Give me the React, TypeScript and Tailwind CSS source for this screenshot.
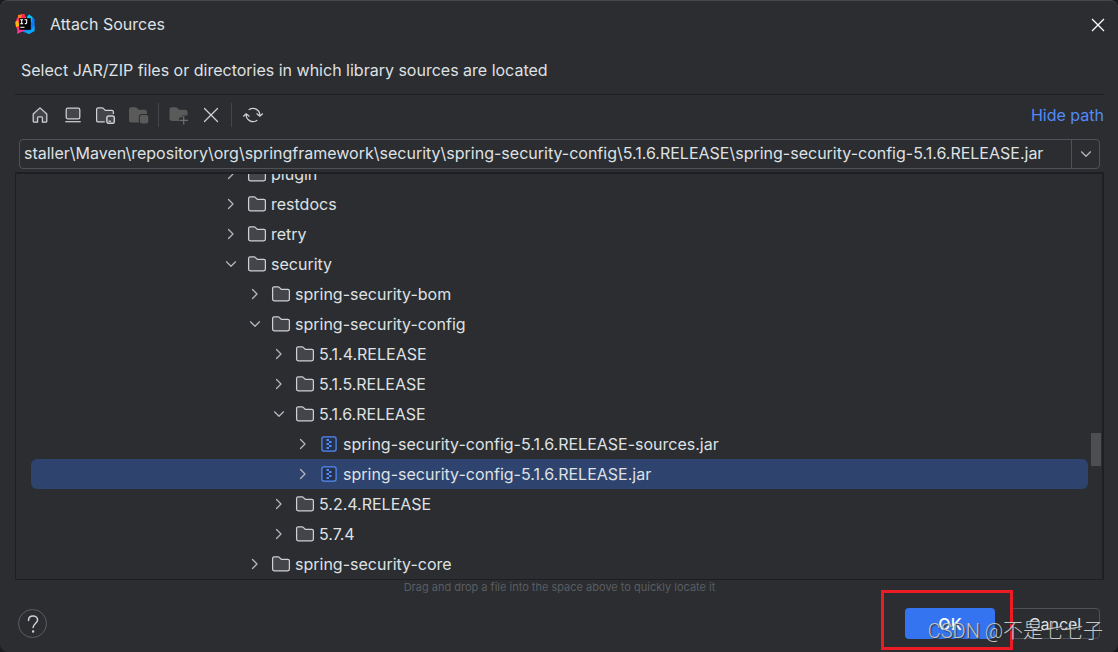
import React from "react";

type Node = { name: string; level: number; open?: boolean; jar?: boolean; selected?: boolean };

const nodes: Node[] = [
  { name: "plugin", level: 0 },
  { name: "restdocs", level: 0 },
  { name: "retry", level: 0 },
  { name: "security", level: 0, open: true },
  { name: "spring-security-bom", level: 1 },
  { name: "spring-security-config", level: 1, open: true },
  { name: "5.1.4.RELEASE", level: 2 },
  { name: "5.1.5.RELEASE", level: 2 },
  { name: "5.1.6.RELEASE", level: 2, open: true },
  { name: "spring-security-config-5.1.6.RELEASE-sources.jar", level: 3, jar: true },
  { name: "spring-security-config-5.1.6.RELEASE.jar", level: 3, jar: true, selected: true },
  { name: "5.2.4.RELEASE", level: 2 },
  { name: "5.7.4", level: 2 },
  { name: "spring-security-core", level: 1 },
];

const indents = ["pl-[192px]", "pl-[216px]", "pl-[240px]", "pl-[264px]"];

function Icon({ children, className = "" }: { children: React.ReactNode; className?: string }) {
  return (
    <svg
      className={"h-5 w-5 shrink-0 " + className}
      viewBox="0 0 20 20"
      fill="none"
      stroke="#ced0d6"
      strokeWidth="1.25"
      aria-hidden="true"
    >
      {children}
    </svg>
  );
}

function Chevron({ open }: { open?: boolean }) {
  return (
    <svg
      className="h-4 w-4"
      viewBox="0 0 16 16"
      fill="none"
      stroke="#b4b8bf"
      strokeWidth="1.25"
      strokeLinecap="round"
      strokeLinejoin="round"
      aria-hidden="true"
    >
      <path d={open ? "M3.5 5.8 8 10.3l4.5-4.5" : "M5.5 3.5 10 8l-4.5 4.5"} />
    </svg>
  );
}

const folderPath =
  "M1.6 4.5c0-1 .7-1.6 1.6-1.6h3.9c.5 0 .9.2 1.2.5l2 2h6.5c1 0 1.6.7 1.6 1.6v8.1c0 1-.7 1.7-1.6 1.7H3.2c-1 0-1.6-.7-1.6-1.7z";

function FolderIcon() {
  return (
    <Icon>
      <path fill="#43454a" d={folderPath} />
    </Icon>
  );
}

function JarIcon() {
  return (
    <Icon>
      <rect x="2.9" y="2.9" width="14.2" height="14.2" rx="2" fill="#25324d" stroke="#548af7" />
      <path
        d="M7.5 5H10v2H7.5zM10 7h2.500v2H10zM7.500 9H10v2H7.500zM10 11h2.500v2H10zM7.500 13H10v2H7.500z"
        fill="#548af7"
        stroke="none"
      />
    </Icon>
  );
}

function Tool({ label, disabled, children }: { label: string; disabled?: boolean; children: React.ReactNode }) {
  return (
    <button type="button" aria-label={label} disabled={disabled} className="h-5 w-5">
      <Icon>{children}</Icon>
    </button>
  );
}

function IdeaLogo() {
  return (
    <svg className="h-5 w-5" viewBox="0 0 20 20" aria-hidden="true">
      <path d="M3 1 9 0l2 4-2 5H3z" fill="#fc801d" />
      <path d="M0 9 2.5 3 8 6v9l-4 4-2.5-5z" fill="#fe315d" />
      <path d="M.5 8 3 6l1.500 6L1 13z" fill="#fdb60d" />
      <path d="m7 0 3 .5v5L6 4z" fill="#fe2857" />
      <path d="m12 3 2-2.500 5.500 4.500V17L14 20l-8-3 6-6z" fill="#087cfa" />
      <path d="m12 3 2-2.500L17.500 3l-1 5-4-1z" fill="#07c3f2" />
      <path d="m16 16 3.500-5v6L14 20l-6-3z" fill="#0aa5f5" />
      <path d="M2.500 14.500 9 13l1 3.500-5 2L2 20z" fill="#ff318c" />
      <path d="M4.200 4.200h11.600v11.600H4.200z" fill="#000" />
      <path
        d="M5.200 5.700h3M6.700 5.700v4M5.200 9.700h3M9.500 5.700h2.200v2.900c0 .8-.5 1.200-1.900 1"
        fill="none"
        stroke="#fff"
        strokeWidth="1.1"
      />
      <path d="M5.300 12.800h4.200v1H5.300z" fill="#fff" />
    </svg>
  );
}

function TreeRow({ node }: { node: Node }) {
  return (
    <li
      role="treeitem"
      aria-expanded={!!node.open}
      aria-selected={!!node.selected}
      className={
        "flex h-[30px] shrink-0 items-center rounded-md " +
        indents[node.level] +
        (node.selected ? " bg-[#2e436e]" : "")
      }
    >
      <button type="button" aria-label={"Toggle " + node.name} className="mr-2 h-4 w-4">
        <Chevron open={node.open} />
      </button>
      {node.jar ? <JarIcon /> : <FolderIcon />}
      <span className="ml-1 whitespace-nowrap">{node.name}</span>
    </li>
  );
}

export default function App() {
  return (
    <div className="bg-[#1b1b1d]">
      <div className="flex min-h-screen flex-col rounded-lg border-t border-[#46484c] bg-[#2b2d30] font-['Inter',sans-serif] text-base leading-5 text-[#dfe1e5]">
        {/* Title bar */}
        <header className="flex h-[46px] items-center pl-[15px] pr-[10px]">
          <IdeaLogo />
          <h1 className="ml-[15px] grow">Attach Sources</h1>
          <button type="button" aria-label="Close" className="h-5 w-5">
            <Icon>
              <path stroke="#fff" d="m4 5 12 12M16 5 4 17" />
            </Icon>
          </button>
        </header>

        <main className="flex grow flex-col pl-[15px] pr-[14px]">
          <p className="flex h-12 items-center border-b border-[#1e1f22] pb-px pl-[6px]">
            Select JAR/ZIP files or directories in which library sources are located
          </p>

          {/* Toolbar */}
          <div className="flex h-11 items-center pb-1 pl-[15px]">
            <div className="flex grow items-center gap-[13px]">
              <Tool label="Home directory">
                <path
                  fill="#43454a"
                  strokeLinejoin="round"
                  d="M3.2 9 10 2.9 16.8 9v7.200c0 .6-.4 1-1 1h-3.400v-4.400c0-.6-.4-1-1-1H8.600c-.6 0-1 .4-1 1v4.400H4.200c-.6 0-1-.4-1-1z"
                />
              </Tool>
              <Tool label="Desktop directory">
                <rect x="3.2" y="3.2" width="13.6" height="10.6" rx="1.6" fill="#43454a" />
                <path d="M2.3 16.7h15.4" />
              </Tool>
              <Tool label="Project directory">
                <path
                  fill="#43454a"
                  stroke="none"
                  d="M.6 4.500c0-1 .7-1.600 1.600-1.600h3.900l3.200 2.500h6.500c1 0 1.600.7 1.600 1.600v3h-6.800v7.200H2.200c-1 0-1.600-.7-1.600-1.700z"
                />
                <path d="M8.800 16.900H2.200c-1 0-1.600-.7-1.600-1.700V4.500c0-1 .7-1.600 1.600-1.600h3.900c.5 0 .9.2 1.200.5l2 2h6.500c1 0 1.600.7 1.600 1.600v2" />
                <rect x="10.9" y="10.900" width="7.400" height="7.400" rx="1.600" fill="#43454a" strokeWidth="1.5" />
                <path d="M12.500 16.200h2.500" />
              </Tool>
              <Tool label="Module directory" disabled>
                <g fill="#5a5a5a" stroke="none">
                  <path d="M0 4.500c0-1.300.9-2.300 2.200-2.300h4c.6 0 1.200.2 1.600.6l1.800 1.900h6.200c1.300 0 2.200 1 2.200 2.300v2h-5c-1.800 0-3.200 1.200-3.200 3.200v5.400H2.200C.9 17.600 0 16.600 0 15.300z" />
                  <rect x="10.800" y="10" width="8.500" height="8.500" rx="2.200" />
                </g>
              </Tool>
              <div className="-mx-1 h-6 w-px bg-[#43454a]" />
              <Tool label="New folder" disabled>
                <path
                  fill="#5a5a5a"
                  stroke="none"
                  d="M1.500 4.500c0-1.300.9-2.300 2.200-2.300h4c.6 0 1.200.2 1.600.6l1.800 1.900h6.200c1.300 0 2.200 1 2.200 2.300v3.500h-5v2H11v3.400H3.700c-1.300 0-2.200-1-2.200-2.300z"
                />
                <path stroke="#6f6f6f" d="M15.700 11.200v8.300M11.500 15.400h8.400" />
              </Tool>
              <Tool label="Delete">
                <path strokeLinecap="round" d="m3.500 3.500 13 13M16.500 3.500l-13 13" />
              </Tool>
              <div className="-mr-[2px] -ml-[3px] h-6 w-px bg-[#43454a]" />
              <Tool label="Refresh">
                <path
                  strokeLinecap="round"
                  strokeLinejoin="round"
                  d="M6.200 4.600A6.800 6.800 0 0 1 16.800 10v.8M13.900 8.800l2.900 2.400 2.800-2.400M13.800 15.400A6.800 6.800 0 0 1 3.200 10v-.8M.5 11.200l2.700-2.400 2.900 2.400"
                />
              </Tool>
            </div>
            <a href="#path" className="text-[#548af7]">
              Hide path
            </a>
          </div>

          {/* Path */}
          <div id="path" className="ml-1 mr-1 flex h-[30px] rounded border border-[#4e5157]">
            <input
              type="text"
              aria-label="Path"
              readOnly
              value="staller\Maven\repository\org\springframework\security\spring-security-config\5.1.6.RELEASE\spring-security-config-5.1.6.RELEASE.jar"
              className="ml-1 min-w-0 grow bg-transparent pb-[2px] outline-none"
            />
            <button
              type="button"
              aria-label="Recent paths"
              className="flex w-7 shrink-0 items-center justify-center border-l border-[#4e5157]"
            >
              <Chevron open />
            </button>
          </div>

          {/* File tree */}
          <div className="relative mt-[3px] flex h-[408px] flex-col justify-end overflow-hidden border border-t-2 border-r-2 border-[#1e1f22] pl-[15px] pr-[14px]">
            <ul role="tree" aria-label="Files" className="flex flex-col">
              {nodes.map((node) => (
                <TreeRow key={node.name} node={node} />
              ))}
            </ul>
            <div className="absolute right-px top-[259px] h-[33px] w-[10px] bg-[#4d4e51]" />
          </div>
          <p className="text-center text-[11px] leading-[14px] text-[#5a5d63]">
            Drag and drop a file into the space above to quickly locate it
          </p>

          {/* Buttons */}
          <footer className="relative mt-[14px] flex items-center pl-[3px] pr-1">
            <button
              type="button"
              aria-label="Help"
              className="flex h-[29px] w-[29px] items-center justify-center rounded-full border border-[#5a5d63]"
            >
              <Icon>
                <path
                  strokeWidth="1.5"
                  strokeLinecap="round"
                  d="M5.500 6.500C5.500 3.800 7.400 2 10 2s4.600 1.700 4.600 4.100c0 3.200-4.500 3.800-4.500 7.400"
                />
                <circle cx="10.1" cy="17.5" r=".6" fill="#ced0d6" />
              </Icon>
            </button>
            <div className="grow" />
            <button type="button" className="h-[31px] w-[90px] rounded bg-[#3574f0] font-medium text-white">
              OK
            </button>
            <button type="button" className="ml-[15px] h-[31px] w-[90px] rounded border border-[#4e5157]">
              Cancel
            </button>
            <div className="pointer-events-none absolute -top-[18px] right-[91px] h-[60px] w-[132px] border-[3px] border-[#ed1c24]" />
            <span className="pointer-events-none absolute right-px top-[9px] whitespace-nowrap font-['Roboto','Noto_Sans_CJK_SC',sans-serif] text-[20px] leading-7 font-light text-[#c4c5c6] [text-shadow:1px_1px_1px_#2b2d30]">
              CSDN @不是七七子
            </span>
          </footer>
        </main>
      </div>
    </div>
  );
}
